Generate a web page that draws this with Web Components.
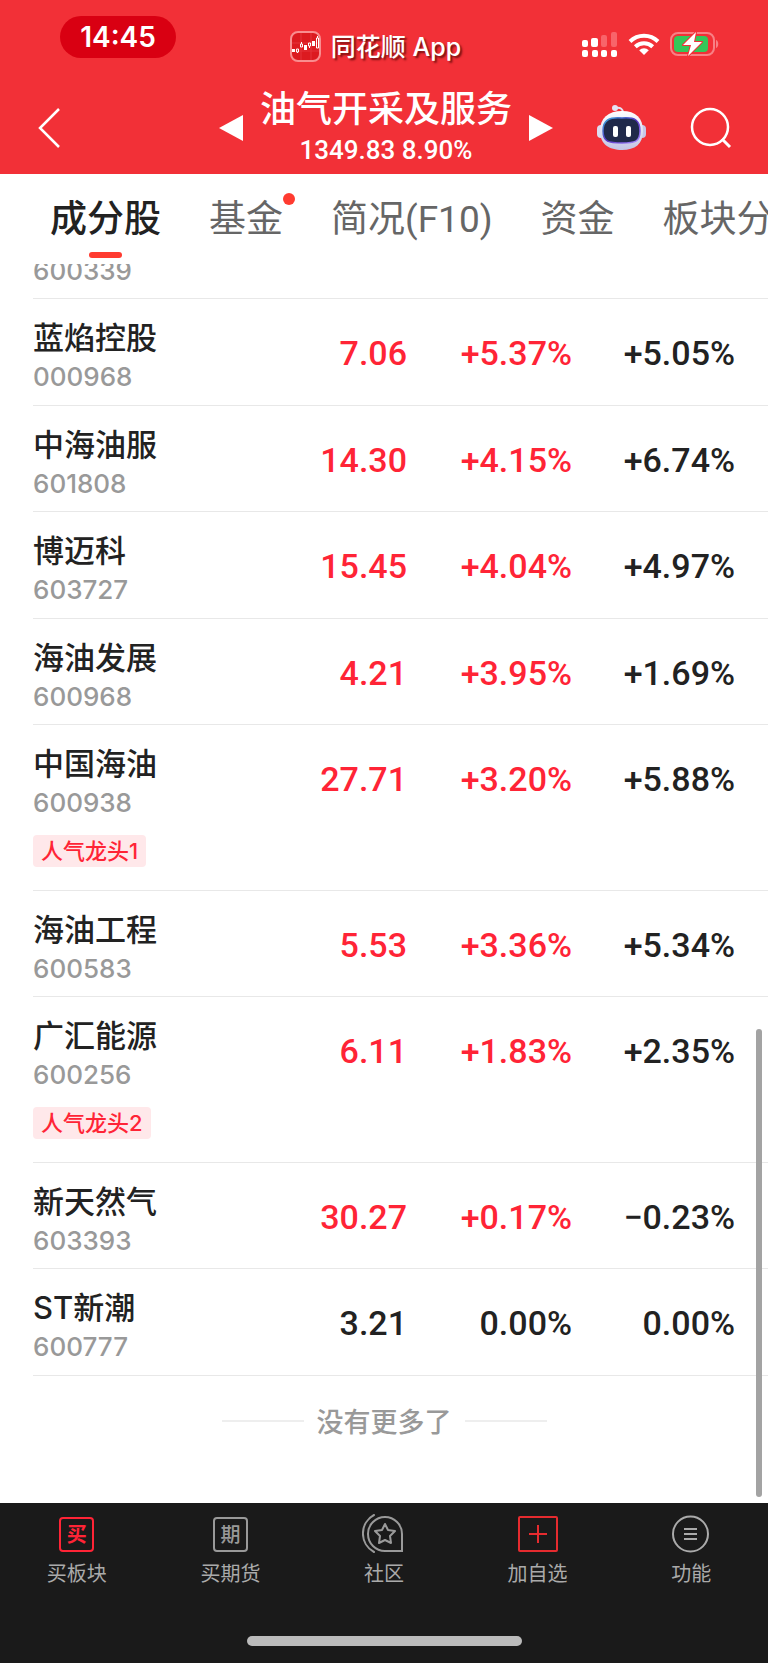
<!DOCTYPE html>
<html lang="zh-CN">
<head>
<meta charset="utf-8">
<meta name="viewport" content="width=device-width, initial-scale=1">
<title>油气开采及服务</title>
<style>
  body {
    margin: 0;
    min-height: 100vh;
    display: flex;
    flex-direction: column;
    background: #fff;
    color: #222;
    font-family: Roboto, "Noto Sans CJK SC", sans-serif;
  }
  stock-list { flex: 1; }
</style>
</head>
<body>
<app-header>
  <status-bar slot="status" time="14:45">同花顺 App</status-bar>
  <span slot="title">油气开采及服务</span>
  <span slot="quote">1349.83 8.90%</span>
</app-header>
<tab-strip>
  <tab-item active>成分股</tab-item>
  <tab-item dot>基金</tab-item>
  <tab-item>简况(F10)</tab-item>
  <tab-item>资金</tab-item>
  <tab-item>板块分</tab-item>
</tab-strip>
<stock-list>没有更多了</stock-list>
<bottom-bar>
  <bar-action icon="buy">买板块</bar-action>
  <bar-action icon="futures">买期货</bar-action>
  <bar-action icon="community">社区</bar-action>
  <bar-action icon="add">加自选</bar-action>
  <bar-action icon="menu">功能</bar-action>
</bottom-bar>

<script>
class ShadowElement extends HTMLElement {
  constructor() {
    super();
    this.attachShadow({ mode: 'open' });
  }
  connectedCallback() {
    this.shadowRoot.innerHTML = this.render();
  }
}

customElements.define('status-bar', class extends ShadowElement {
  render() {
    return `
    <style>
      :host { display: flex; justify-content: space-between; align-items: flex-start;
        box-sizing: border-box; height: 82px; padding: 16px 49px 0 60px; color: #fff; }
      .time { width: 116px; border-radius: 21px; text-align: center;
        background: #d90012; font: 600 28px/42px Inter, sans-serif; }
      .app { display: flex; align-items: center; gap: 9px; margin-top: 15px; padding-right: 6px;
        font: 500 25px/30px Inter, "Noto Sans CJK SC", sans-serif; text-shadow: 2px 2px 2px #7a1010; white-space: nowrap; }
      .icons { display: flex; align-items: center; gap: 10px; margin-top: 15px; }
      svg { display: block; }
    </style>
    <div class="time">${this.getAttribute('time')}</div>
    <div class="app">
      <svg width="32" height="31" viewBox="0 0 32 31">
        <rect x="1" y="1" width="29" height="29" rx="7" fill="#dc1a20" stroke="#f98d8f" stroke-width="2"/>
        <path d="M2 12h27M2 20h27M11 2v27M21 2v27" stroke="#e4333a" stroke-width="1"/>
        <path d="M2 18h3v3H2zM14 14h3v5h-3zM22 10h3v5h-3z" fill="#fff"/>
        <path d="M6.500 18h2v3h-2zM10.500 13h2v3h-2zM18.500 12h2v3h-2zM26.500 7h2v10h-2zM7.500 21v1M11.500 11v2M19.500 15v2M27.500 5v2" fill="none" stroke="#fff"/>
      </svg>
      <span><slot></slot></span>
    </div>
    <div class="icons">
      <svg width="37" height="26" viewBox="0 0 37 26">
        <g fill="#fff"><rect x="1" y="9" width="6" height="7" rx="2"/><rect x="10" y="7" width="7" height="9" rx="2"/>
        <rect x="1" y="19" width="6" height="7" rx="2"/><rect x="11" y="19" width="6" height="7" rx="2"/><rect x="20" y="19" width="6" height="7" rx="2"/><rect x="30" y="19" width="6" height="7" rx="2"/></g>
        <g fill="#f8646a"><rect x="20" y="4" width="6" height="12" rx="2"/><rect x="30" y="1" width="6" height="15" rx="2"/></g>
      </svg>
      <svg width="32" height="24" viewBox="0 0 32 24" fill="none" stroke="#fff" stroke-width="4">
        <path d="M2 9.500a20 20 0 0 1 28 0"/><path d="M7.300 14.800a12.500 12.500 0 0 1 17.400 0"/>
        <path d="M16 23l-4.800-4.800a7 7 0 0 1 9.600 0z" fill="#fff" stroke="none"/>
      </svg>
      <svg width="49" height="24" viewBox="0 0 49 24">
        <rect x="1" y="1" width="43" height="22" rx="7" fill="none" stroke="#f88085" stroke-width="2"/>
        <path d="M46 8c3 1 3 7 0 8z" fill="#f88085"/>
        <rect x="4" y="4" width="34" height="16" rx="4" fill="#34c759"/>
        <path d="M26 0L13 13h8l-3 11L32 10h-8z" fill="#fff" stroke="#f23037" stroke-width="2" paint-order="stroke" stroke-linejoin="round"/>
      </svg>
    </div>`;
  }
});

customElements.define('app-header', class extends ShadowElement {
  render() {
    return `
    <style>
      :host { display: block; background: #f23037; color: #fff; }
      nav { display: grid; grid-template-columns: 1fr auto 1fr; align-items: center;
        box-sizing: border-box; height: 92px; padding: 0 36px; }
      button { display: block; padding: 0; border: 0; background: none; color: inherit; }
      svg { display: block; }
      .center { display: flex; align-items: center; gap: 17px; padding-left: 4px; }
      .titles { text-align: center; padding-bottom: 4px; }
      h1 { margin: 0 0 6px; font: 500 36px/42px "Noto Sans CJK SC", sans-serif; }
      p { margin: 0; font: 500 26px/34px Roboto, sans-serif; }
      .right { display: flex; justify-content: flex-end; align-items: center; gap: 43px; }
    </style>
    <slot name="status"></slot>
    <nav>
      <button aria-label="返回"><svg width="26" height="42" viewBox="0 0 26 42"><path d="M23 2L4 21l19 19" fill="none" stroke="#fff" stroke-width="2.500"/></svg></button>
      <div class="center">
        <button aria-label="上一个"><svg width="24" height="26"><path d="M24 0v26L0 13z" fill="#fff"/></svg></button>
        <div class="titles"><h1><slot name="title"></slot></h1><p><slot name="quote"></slot></p></div>
        <button aria-label="下一个"><svg width="24" height="26"><path d="M0 0v26l24-13z" fill="#fff"/></svg></button>
      </div>
      <div class="right">
        <button aria-label="智能助手"><svg width="50" height="46" viewBox="0 0 50 46">
          <defs>
            <linearGradient id="shell" x2="0" y2="1"><stop offset="0" stop-color="#fff"/><stop offset="1" stop-color="#c3c3e4"/></linearGradient>
            <linearGradient id="rim" x2="1" y2="1"><stop offset="0" stop-color="#38a9d8"/><stop offset=".5" stop-color="#5a35c8"/><stop offset="1" stop-color="#a98cff"/></linearGradient>
          </defs>
          <path d="M19 3q7-1 7 5" fill="none" stroke="#e4e2f4" stroke-width="2"/><circle cx="18" cy="3" r="3" fill="#e4e2f4"/>
          <rect x="0" y="20" width="8" height="13" rx="4" fill="#dcdcf0"/><rect x="41" y="20" width="8" height="13" rx="4" fill="#c7c7e8"/>
          <path d="M25 6C39 6 46 13 46 26S38 45 25 45 3 39 3 26 11 6 25 6z" fill="url(#shell)"/>
          <path d="M25 13C38 12 43 15 43 26S38 38 25 38 6 37 6 26 12 12 25 13z" fill="#20294a" stroke="url(#rim)" stroke-width="1.500"/>
          <rect x="16" y="21" width="5" height="11" rx="2" fill="#fff"/><rect x="29" y="21" width="5" height="11" rx="2" fill="#fff"/>
        </svg></button>
        <button aria-label="搜索"><svg width="42" height="42" viewBox="0 0 42 42" fill="none" stroke="#fff" stroke-width="2.500"><circle cx="20" cy="20" r="18"/><path d="M32 32l8 8" stroke-width="3"/></svg></button>
      </div>
    </nav>`;
  }
});

customElements.define('tab-strip', class extends ShadowElement {
  render() {
    return `
    <style>
      :host { display: block; height: 90px; overflow: hidden; background: #fff; }
      nav { display: flex; gap: 48px; padding-left: 50px; }
    </style>
    <nav><slot></slot></nav>`;
  }
});

customElements.define('tab-item', class extends ShadowElement {
  render() {
    return `
    <style>
      :host { display: block; flex: none; position: relative; }
      a { display: block; padding-top: 20px; color: #666; text-decoration: none; white-space: nowrap;
        font: 400 37px/52px Roboto, "Noto Sans CJK SC", sans-serif; }
      a::after { content: ""; display: block; width: 33px; height: 6px; margin: 6px auto 0; border-radius: 3px; }
      :host([active]) a { color: #222; font-weight: 500; }
      :host([active]) a::after { background: #ff3b30; }
      :host([dot])::after { content: ""; position: absolute; top: 19px; right: -12px; width: 12px; height: 12px;
        border-radius: 50%; background: #ff3b30; }
    </style>
    <a href="#"><slot></slot></a>`;
  }
});

const STOCKS = [
  { code: '600339' },
  { name: '蓝焰控股', code: '000968', price: '7.06', change: '+5.37%', rate: '+5.05%' },
  { name: '中海油服', code: '601808', price: '14.30', change: '+4.15%', rate: '+6.74%' },
  { name: '博迈科', code: '603727', price: '15.45', change: '+4.04%', rate: '+4.97%' },
  { name: '海油发展', code: '600968', price: '4.21', change: '+3.95%', rate: '+1.69%' },
  { name: '中国海油', code: '600938', price: '27.71', change: '+3.20%', rate: '+5.88%', tag: '人气龙头1' },
  { name: '海油工程', code: '600583', price: '5.53', change: '+3.36%', rate: '+5.34%' },
  { name: '广汇能源', code: '600256', price: '6.11', change: '+1.83%', rate: '+2.35%', tag: '人气龙头2' },
  { name: '新天然气', code: '603393', price: '30.27', change: '+0.17%', rate: '−0.23%' },
  { name: 'ST新潮', code: '600777', price: '3.21', change: '0.00%', rate: '0.00%' }
];

customElements.define('stock-list', class extends ShadowElement {
  row(s) {
    if (!s.name) {
      return `<tr class="cut"><td><div class="code">${s.code}</div></td><td></td><td></td><td></td></tr>`;
    }
    const cls = [s.change.startsWith('+') ? 'up' : '', s.tag ? 'tagged' : ''].join(' ');
    return `<tr class="${cls}">
      <td><div class="name">${s.name}</div><div class="code">${s.code}</div>${s.tag ? `<div class="tag">${s.tag}</div>` : ''}</td>
      <td class="num">${s.price}</td><td class="num">${s.change}</td><td class="num rate">${s.rate}</td></tr>`;
  }
  render() {
    return `
    <style>
      :host { display: block; position: relative; overflow: hidden; background: #fff; }
      .rows { padding-left: 33px; }
      table { width: 100%; table-layout: fixed; border-collapse: separate; border-spacing: 0; }
      .price { width: 120px; } .change { width: 165px; } .last { width: 196px; }
      td { padding: 19px 0 10px; vertical-align: top; border-bottom: 1px solid #e8e8e8; }
      tr:nth-child(even) td { padding-bottom: 11px; }
      tr.tagged td { padding-bottom: 23px; }
      tr.cut td { padding-top: 0; }
      tr.cut .code { margin-top: -10px; }
      .name { font: 500 31px/40px Inter, "Noto Sans CJK SC", sans-serif; }
      .code { margin-top: 2px; color: #999; font: 500 26px/34px Inter, sans-serif; }
      .tag { width: fit-content; margin-top: 15px; padding: 0 8px; border-radius: 4px; background: #ffe8ea; color: #ff2436;
        font: 500 22px/32px Inter, "Noto Sans CJK SC", sans-serif; }
      td.num { padding-top: 34px; text-align: right; font: 500 34px/40px Roboto, sans-serif; }
      .up td.num { color: #ff2436; }
      td.rate, .up td.rate { padding-right: 33px; color: #222; }
      .end { display: flex; justify-content: center; align-items: center; gap: 13px; padding: 26px 0 61px;
        color: #999; font: 500 27px/38px "Noto Sans CJK SC", sans-serif; }
      .end::before, .end::after { content: ""; width: 82px; height: 2px; background: #eee; }
      .thumb { position: absolute; right: 6px; bottom: 6px; width: 6px; height: 468px; border-radius: 3px; background: #a3a3a3; }
    </style>
    <div class="rows"><table>
      <colgroup><col><col class="price"><col class="change"><col class="last"></colgroup>
      <tbody>${STOCKS.map(s => this.row(s)).join('')}</tbody>
    </table></div>
    <div class="end"><slot></slot></div>
    <div class="thumb"></div>`;
  }
});

customElements.define('bottom-bar', class extends ShadowElement {
  render() {
    return `
    <style>
      :host { display: block; padding: 11px 0 17px; background: #1a1a1a; }
      nav { display: grid; grid-template-columns: repeat(5, 1fr); }
      .home { width: 275px; height: 10px; margin: 49px auto 0; border-radius: 5px; background: #bbb; }
    </style>
    <nav><slot></slot></nav>
    <div class="home"></div>`;
  }
});

const ICONS = {
  buy: '<span class="box red">买</span>',
  futures: '<span class="box">期</span>',
  community: `<svg width="44" height="40" viewBox="0 0 44 40" fill="none" stroke="#9a9a9a" stroke-width="2" stroke-linecap="round">
    <path d="M12 1A21 21 0 0 0 12 38"/><path d="M23 37a17 17 0 1 1 17-17v17z"/>
    <path d="M23 10l3 6 7 1-5 5 1 7-6-3-6 3 1-7-5-5 7-1z" stroke-linejoin="round"/></svg>`,
  add: `<svg width="40" height="36" viewBox="0 0 40 36" fill="none" stroke="#e62b2f" stroke-width="2">
    <rect x="1" y="1" width="38" height="34" rx="1"/><path d="M11 18h18M20 9v18"/></svg>`,
  menu: `<svg width="38" height="38" viewBox="0 0 38 38" fill="none" stroke="#aaa" stroke-width="2">
    <circle cx="18.500" cy="19" r="17.500"/><path d="M12 14h13M12 19h13M12 24h13"/></svg>`
};

customElements.define('bar-action', class extends ShadowElement {
  render() {
    return `
    <style>
      :host { display: block; }
      button { display: block; width: 100%; padding: 0; border: 0; background: none; color: #aaa;
        font: 400 20px/28px "Noto Sans CJK SC", sans-serif; }
      .icon { display: flex; align-items: center; justify-content: center; height: 40px; margin-bottom: 5px; }
      .box { box-sizing: border-box; width: 35px; height: 35px; border: 2px solid #999; border-radius: 4px;
        color: #999; font-weight: 500; line-height: 30px; text-align: center; }
      .box.red { border-color: #ff2436; color: #ff2436; font-weight: 700; }
    </style>
    <button><span class="icon">${ICONS[this.getAttribute('icon')]}</span><slot></slot></button>`;
  }
});
</script>
</body>
</html>
